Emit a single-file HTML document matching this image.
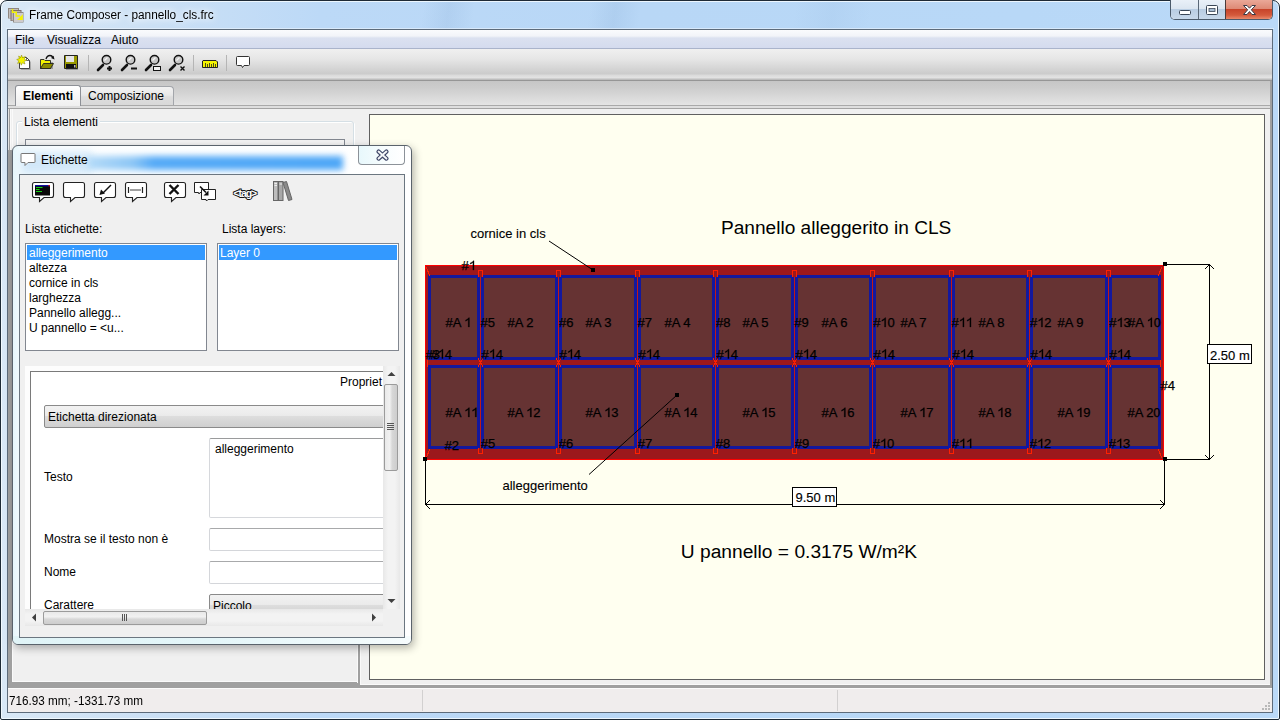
<!DOCTYPE html>
<html><head><meta charset="utf-8">
<style>
*{margin:0;padding:0;box-sizing:border-box}
html,body{width:1280px;height:720px;overflow:hidden;background:#fff;font-family:"Liberation Sans",sans-serif;font-size:12px;color:#000}
.a{position:absolute}
.t{position:absolute;white-space:nowrap;line-height:1}
</style></head><body>
<!-- window frame -->
<div class="a" style="left:0;top:0;width:1280px;height:720px;border:1px solid #1e2a36;border-radius:7px 7px 2px 2px;box-shadow:inset 0 0 0 1px rgba(245,252,255,.85);background:linear-gradient(90deg,#d9e8f6 0%,#cbe0f5 12%,#bcd9f7 25%,#b8d7f6 50%,#b8d8f7 80%,#bad9f8 100%)"></div>

<div class="a" style="left:1px;top:2px;width:1278px;height:27px;background:linear-gradient(97deg,rgba(255,255,255,0) 33%,rgba(90,130,180,.10) 35%,rgba(255,255,255,0) 37%,rgba(255,255,255,0) 46%,rgba(90,130,180,.10) 48%,rgba(255,255,255,0) 50%,rgba(255,255,255,0) 62%,rgba(90,130,180,.06) 65%,rgba(255,255,255,0) 68%)"></div>
<!-- caption buttons -->
<div class="a" style="left:1170px;top:0;width:103px;height:20px;border:1px solid #4b5a6b;border-top:none;border-radius:0 0 5px 5px;overflow:hidden;background:#fff">
  <div class="a" style="left:0;top:0;width:28px;height:19px;background:linear-gradient(#e9f0f8 0%,#dce6f1 45%,#b9cde3 50%,#c7d8ea 100%);border-right:1px solid #5a6878"></div>
  <div class="a" style="left:28px;top:0;width:27px;height:19px;background:linear-gradient(#e9f0f8 0%,#dce6f1 45%,#b9cde3 50%,#c7d8ea 100%);border-right:1px solid #4a3a3a"></div>
  <div class="a" style="left:55px;top:0;width:47px;height:19px;background:linear-gradient(#eaa898 0%,#de8a76 45%,#c7442a 50%,#d45a3c 80%,#e98a6c 100%)"></div>
</div>
<svg class="a" style="left:1170px;top:0" width="103" height="20" viewBox="1170 0 103 20">
  <rect x="1179.5" y="10.5" width="11" height="4" rx="1" fill="#fff" stroke="#3a4656" stroke-width="1"/>
  <rect x="1206.5" y="5.5" width="11" height="9" rx="1" fill="#fff" stroke="#3a4656" stroke-width="1"/>
  <rect x="1209" y="8.5" width="6" height="3" fill="#a8bdd4" stroke="#3a4656" stroke-width="0.8"/>
  <path d="M1243.5 5.5 H1247 L1249.5 8.2 L1252 5.5 H1255.5 L1251.3 9.8 L1255.5 14.5 H1252 L1249.5 11.6 L1247 14.5 H1243.5 L1247.7 9.8Z" fill="#fff" stroke="#3a3a46" stroke-width="1" stroke-linejoin="round"/>
</svg>

<!-- title -->
<div class="t" style="left:29px;top:9px;font-size:12px;color:#000;transform:scaleX(0.985);text-shadow:0 0 6px #fff,0 0 10px #fff;transform-origin:0 0">Frame Composer - pannello_cls.frc</div>

<div class="a" style="left:6px;top:28px;width:1268px;height:1px;background:rgba(240,248,255,.55)"></div>
<!-- client area -->
<div class="a" id="client" style="left:7px;top:29px;width:1266px;height:684px;border:1px solid #5d6b7a;background:#f0f0f0"></div>

<!-- menu bar -->
<div class="a" style="left:8px;top:30px;width:1264px;height:19px;background:linear-gradient(#fafbfd 0px,#f2f4f9 6px,#dbe1f0 8px,#d4dbee 18px);border-bottom:1px solid #aab4cb"></div>
<div class="t" style="left:15px;top:34px">File</div>
<div class="t" style="left:47px;top:34px">Visualizza</div>
<div class="t" style="left:111px;top:34px">Aiuto</div>

<!-- toolbar -->
<div class="a" style="left:8px;top:49px;width:1264px;height:31px;background:linear-gradient(#f0f0f0 0px,#e6e6e6 10px,#cbcbcb 25px,#dadada 26px,#e3e3e3 29px,#bdbdbd 30px)"></div>
<div class="a" style="left:8px;top:80px;width:1264px;height:1px;background:#969696"></div>

<!-- tab strip -->
<div class="a" style="left:8px;top:81px;width:1264px;height:24px;background:linear-gradient(#c6c6c6,#cdcdcd 30%,#e4e4e4)"></div>
<div class="a" style="left:8px;top:105px;width:1264px;height:1px;background:#a9a9a9"></div>
<div class="a" style="left:8px;top:106px;width:1264px;height:2px;background:#dedede"></div>
<div class="a" style="left:8px;top:108px;width:1264px;height:1px;background:#a3a3a3"></div>



<!-- title icon -->
<svg class="a" style="left:6px;top:6px" width="20" height="20" viewBox="6 6 20 20">
  <rect x="8" y="8" width="11" height="10.5" fill="#8f8780"/>
  <rect x="9" y="9" width="9" height="9" fill="#c4bfbd"/>
  <rect x="10.5" y="10" width="11" height="11" fill="#7e6f66"/>
  <rect x="11.5" y="11" width="9" height="9.5" fill="#bdb6b3"/>
  <rect x="13" y="12" width="10.5" height="10.5" fill="#8e8984"/>
  <rect x="14" y="13" width="9" height="9" fill="#cfcbcb"/>
  <path d="M12.5 9 V12.3 H16.2 V16 H20" fill="none" stroke="#f2f200" stroke-width="1.5"/>
  <path d="M22.8 14.2 V20 H17Z" fill="#f2f200"/>
</svg>
<!-- main toolbar icons -->
<svg class="a" style="left:0;top:49px" width="260" height="28" viewBox="0 49 260 28">
  <g>
    <!-- new -->
    <path d="M20 58 H27 L30 61 V69 H20Z" fill="#555" transform="translate(1,1)" opacity=".35"/>
    <path d="M19.5 57.5 H26.5 L29.5 60.5 V68.5 H19.5Z" fill="#fff" stroke="#444" stroke-width="1"/>
    <path d="M26.5 57.5 V60.5 H29.5" fill="none" stroke="#444" stroke-width="0.8"/>
    <path d="M21.5 55 L22.6 57.6 L25.3 56.5 L24.2 59.2 L26.6 60.3 L24.1 61.3 L25 64 L22.4 62.8 L21.3 65.2 L20.3 62.6 L17.6 63.4 L18.8 60.9 L16.7 59.5 L19.3 58.6 L18.6 56 L20.9 57.4Z" fill="#f3f300" stroke="#8a8a00" stroke-width="0.5"/>
    <!-- open -->
    <path d="M41 60 H45 L46 61 H52 V68 H41Z" fill="#333" transform="translate(1,1)" opacity=".35"/>
    <path d="M40.5 59.5 H44 L45 60.5 H50.5 V68.5 H40.5Z" fill="#f2f200" stroke="#222" stroke-width="0.9"/>
    <path d="M40.5 68.5 L43.5 63.5 H53.5 L50.5 68.5Z" fill="#8c8c00" stroke="#222" stroke-width="0.9"/>
    <path d="M46 59 Q47 55.5 50 55.5 Q52 55.5 53 57.5" fill="none" stroke="#111" stroke-width="1.3"/>
    <path d="M51 58 L54.5 59.5 L53.6 55.8Z" fill="#111"/>
    <!-- save -->
    <path d="M65 56 H77 V69 H65Z" fill="#333" transform="translate(1,1)" opacity=".35"/>
    <path d="M64.5 55.5 H77.5 V68.5 H64.5Z" fill="#999900" stroke="#222" stroke-width="1"/>
    <rect x="66" y="56" width="8" height="6" fill="#e6e6e6"/>
    <rect x="66" y="64" width="10" height="4" fill="#111"/>
    <rect x="74" y="65" width="1.5" height="2.5" fill="#bbb"/>
    <!-- sep -->
    <rect x="88" y="55" width="1" height="16" fill="#b5b5b5"/>
    <rect x="193" y="55" width="1" height="16" fill="#b5b5b5"/>
    <rect x="226" y="55" width="1" height="16" fill="#b5b5b5"/>
  </g>
  <g id="zooms">
    <g>
      <path d="M98 70 L103 65" stroke="#111" stroke-width="2.6" stroke-linecap="round"/>
      <circle cx="106.5" cy="59.8" r="4.3" fill="#c8c8c8" stroke="#111" stroke-width="1.4"/>
      <path d="M104.5 60.5 L107.5 57.5" stroke="#f5f5f5" stroke-width="1.2"/>
      <path d="M107 68.5 H112 M109.5 66 V71" stroke="#111" stroke-width="2"/>
    </g>
    <g>
      <path d="M122 70 L127 65" stroke="#111" stroke-width="2.6" stroke-linecap="round"/>
      <circle cx="130.5" cy="59.8" r="4.3" fill="#c8c8c8" stroke="#111" stroke-width="1.4"/>
      <path d="M128.5 60.5 L131.5 57.5" stroke="#f5f5f5" stroke-width="1.2"/>
      <path d="M131 68.5 H137" stroke="#111" stroke-width="2"/>
    </g>
    <g>
      <path d="M146 70 L151 65" stroke="#111" stroke-width="2.6" stroke-linecap="round"/>
      <circle cx="154.5" cy="59.8" r="4.3" fill="#c8c8c8" stroke="#111" stroke-width="1.4"/>
      <path d="M152.5 60.5 L155.5 57.5" stroke="#f5f5f5" stroke-width="1.2"/>
      <rect x="153.5" y="66.5" width="7" height="4" fill="#f4f4f4" stroke="#111" stroke-width="1"/>
    </g>
    <g>
      <path d="M170 70 L175 65" stroke="#111" stroke-width="2.6" stroke-linecap="round"/>
      <circle cx="178.5" cy="59.8" r="4.3" fill="#c8c8c8" stroke="#111" stroke-width="1.4"/>
      <path d="M176.5 60.5 L179.5 57.5" stroke="#f5f5f5" stroke-width="1.2"/>
      <path d="M180.5 66.5 L184.5 70.5 M184.5 66.5 L180.5 70.5" stroke="#111" stroke-width="1.4"/>
    </g>
  </g>
  <!-- ruler -->
  <rect x="203" y="61" width="15" height="7" rx="1" fill="#444" opacity=".3"/>
  <path d="M203 60.5 H216 L217.5 62 V67.5 H202.5 V61Z" fill="#f5f500" stroke="#222" stroke-width="1"/>
  <path d="M205.5 63 V67 M207.5 64 V67 M209.5 63 V67 M211.5 64 V67 M213.5 63 V67 M215.5 64 V67" stroke="#222" stroke-width="0.8"/>
  <!-- bubble -->
  <path d="M237.5 56.5 H248.5 Q249.5 56.5 249.5 57.5 V64.5 Q249.5 65.5 248.5 65.5 H244 L242.5 67.5 L241.5 65.5 H237.5 Q236.5 65.5 236.5 64.5 V57.5 Q236.5 56.5 237.5 56.5Z" fill="#fff" stroke="#333" stroke-width="1"/>
</svg>

<!-- tabs -->
<div class="a" style="left:15px;top:85px;width:66px;height:21px;border:1px solid #8d9096;border-bottom:none;border-radius:3px 3px 0 0;background:linear-gradient(#ffffff,#f7f7f7 50%,#efefef)"></div>
<div class="t" style="left:23px;top:90px;font-weight:bold;font-size:12px">Elementi</div>
<div class="a" style="left:81px;top:86px;width:93px;height:19px;border:1px solid #a3a6ab;border-left:none;border-bottom:none;border-radius:0 4px 0 0;background:linear-gradient(#f2f2f2,#e8e8e8 45%,#dddddd 55%,#d8d8d8)"></div>
<div class="t" style="left:88px;top:90px">Composizione</div>

<!-- left panel -->
<div class="a" style="left:8px;top:109px;width:352px;height:579px;background:#a0a0a0"></div>
<div class="a" style="left:12px;top:109px;width:346px;height:573px;background:#f0f0f0;border-left:1px solid #fafafa;border-bottom:1px solid #fafafa"></div>
<div class="a" style="left:357px;top:109px;width:1px;height:574px;background:#fafafa"></div>
<div class="a" style="left:8px;top:109px;width:4px;height:41px;background:linear-gradient(90deg,#e3e3e3 25%,#a0a0a0 25%,#a0a0a0 50%,#fafafa 50%,#fafafa 75%,#f0f0f0 75%)"></div>
<div class="a" style="left:356px;top:109px;width:4px;height:41px;background:#f0f0f0"></div>
<!-- group box Lista elementi -->
<div class="a" style="left:16px;top:121px;width:338px;height:480px;border:1px solid #d5dfe5;border-radius:3px;box-shadow:inset 1px 1px 0 #fff,1px 1px 0 #fff"></div>
<div class="a" style="left:22px;top:114px;width:78px;height:14px;background:#f0f0f0"></div>
<div class="t" style="left:24px;top:116px">Lista elementi</div>
<div class="a" style="left:25px;top:139px;width:320px;height:60px;border:1px solid #828790;background:#f3f3f3"></div>

<!-- right panel -->
<div class="a" style="left:360px;top:109px;width:912px;height:576px;background:#f0f0f0"></div>
<div class="a" style="left:360px;top:645px;width:1px;height:40px;background:#fafafa"></div>
<div class="a" style="left:1270px;top:81px;width:2px;height:604px;background:#a0a0a0"></div>
<div class="a" style="left:360px;top:684px;width:910px;height:1px;background:#fafafa"></div>
<!-- canvas -->
<div class="a" style="left:369px;top:114px;width:896px;height:566px;border:1px solid #606060;background:#fffff0;overflow:hidden">
<svg width="896" height="566" style="position:absolute;left:-1px;top:-1px" viewBox="369 114 896 566" id="draw"><g shape-rendering="crispEdges"><rect x="425" y="265" width="739" height="195" fill="#9c181c"/><rect x="425.5" y="265.5" width="738" height="194" fill="none" stroke="#ff0000" stroke-width="1"/><rect x="428" y="275" width="52" height="85" fill="#13189e"/><rect x="431" y="278" width="46" height="79" fill="#663333"/><rect x="481" y="275" width="77" height="85" fill="#13189e"/><rect x="484" y="278" width="71" height="79" fill="#663333"/><rect x="559" y="275" width="78" height="85" fill="#13189e"/><rect x="562" y="278" width="72" height="79" fill="#663333"/><rect x="638" y="275" width="77" height="85" fill="#13189e"/><rect x="641" y="278" width="71" height="79" fill="#663333"/><rect x="716" y="275" width="78" height="85" fill="#13189e"/><rect x="719" y="278" width="72" height="79" fill="#663333"/><rect x="795" y="275" width="77" height="85" fill="#13189e"/><rect x="798" y="278" width="71" height="79" fill="#663333"/><rect x="873" y="275" width="78" height="85" fill="#13189e"/><rect x="876" y="278" width="72" height="79" fill="#663333"/><rect x="952" y="275" width="77" height="85" fill="#13189e"/><rect x="955" y="278" width="71" height="79" fill="#663333"/><rect x="1030" y="275" width="78" height="85" fill="#13189e"/><rect x="1033" y="278" width="72" height="79" fill="#663333"/><rect x="1109" y="275" width="52" height="85" fill="#13189e"/><rect x="1112" y="278" width="46" height="79" fill="#663333"/><rect x="428" y="365" width="52" height="84" fill="#13189e"/><rect x="431" y="368" width="46" height="78" fill="#663333"/><rect x="481" y="365" width="77" height="84" fill="#13189e"/><rect x="484" y="368" width="71" height="78" fill="#663333"/><rect x="559" y="365" width="78" height="84" fill="#13189e"/><rect x="562" y="368" width="72" height="78" fill="#663333"/><rect x="638" y="365" width="77" height="84" fill="#13189e"/><rect x="641" y="368" width="71" height="78" fill="#663333"/><rect x="716" y="365" width="78" height="84" fill="#13189e"/><rect x="719" y="368" width="72" height="78" fill="#663333"/><rect x="795" y="365" width="77" height="84" fill="#13189e"/><rect x="798" y="368" width="71" height="78" fill="#663333"/><rect x="873" y="365" width="78" height="84" fill="#13189e"/><rect x="876" y="368" width="72" height="78" fill="#663333"/><rect x="952" y="365" width="77" height="84" fill="#13189e"/><rect x="955" y="368" width="71" height="78" fill="#663333"/><rect x="1030" y="365" width="78" height="84" fill="#13189e"/><rect x="1033" y="368" width="72" height="78" fill="#663333"/><rect x="1109" y="365" width="52" height="84" fill="#13189e"/><rect x="1112" y="368" width="46" height="78" fill="#663333"/><rect x="480" y="275" width="1" height="174" fill="#c01c14"/><rect x="558" y="275" width="1" height="174" fill="#c01c14"/><rect x="637" y="275" width="1" height="174" fill="#c01c14"/><rect x="715" y="275" width="1" height="174" fill="#c01c14"/><rect x="794" y="275" width="1" height="174" fill="#c01c14"/><rect x="872" y="275" width="1" height="174" fill="#c01c14"/><rect x="951" y="275" width="1" height="174" fill="#c01c14"/><rect x="1029" y="275" width="1" height="174" fill="#c01c14"/><rect x="1108" y="275" width="1" height="174" fill="#c01c14"/><rect x="479" y="271" width="3" height="6" fill="#9c181c"/><path d="M478.5 277 V270.5 H482.5 V277" fill="none" stroke="#ff2000" stroke-width="1"/><rect x="479" y="448" width="3" height="5" fill="#9c181c"/><path d="M478.5 448 V453.5 H482.5 V448" fill="none" stroke="#ff2000" stroke-width="1"/><path d="M478 358 L483 367 M483 358 L478 367" stroke="#ff2000" stroke-width="1" fill="none"/><rect x="557" y="271" width="3" height="6" fill="#9c181c"/><path d="M556.5 277 V270.5 H560.5 V277" fill="none" stroke="#ff2000" stroke-width="1"/><rect x="557" y="448" width="3" height="5" fill="#9c181c"/><path d="M556.5 448 V453.5 H560.5 V448" fill="none" stroke="#ff2000" stroke-width="1"/><path d="M556 358 L561 367 M561 358 L556 367" stroke="#ff2000" stroke-width="1" fill="none"/><rect x="636" y="271" width="3" height="6" fill="#9c181c"/><path d="M635.5 277 V270.5 H639.5 V277" fill="none" stroke="#ff2000" stroke-width="1"/><rect x="636" y="448" width="3" height="5" fill="#9c181c"/><path d="M635.5 448 V453.5 H639.5 V448" fill="none" stroke="#ff2000" stroke-width="1"/><path d="M635 358 L640 367 M640 358 L635 367" stroke="#ff2000" stroke-width="1" fill="none"/><rect x="714" y="271" width="3" height="6" fill="#9c181c"/><path d="M713.5 277 V270.5 H717.5 V277" fill="none" stroke="#ff2000" stroke-width="1"/><rect x="714" y="448" width="3" height="5" fill="#9c181c"/><path d="M713.5 448 V453.5 H717.5 V448" fill="none" stroke="#ff2000" stroke-width="1"/><path d="M713 358 L718 367 M718 358 L713 367" stroke="#ff2000" stroke-width="1" fill="none"/><rect x="793" y="271" width="3" height="6" fill="#9c181c"/><path d="M792.5 277 V270.5 H796.5 V277" fill="none" stroke="#ff2000" stroke-width="1"/><rect x="793" y="448" width="3" height="5" fill="#9c181c"/><path d="M792.5 448 V453.5 H796.5 V448" fill="none" stroke="#ff2000" stroke-width="1"/><path d="M792 358 L797 367 M797 358 L792 367" stroke="#ff2000" stroke-width="1" fill="none"/><rect x="871" y="271" width="3" height="6" fill="#9c181c"/><path d="M870.5 277 V270.5 H874.5 V277" fill="none" stroke="#ff2000" stroke-width="1"/><rect x="871" y="448" width="3" height="5" fill="#9c181c"/><path d="M870.5 448 V453.5 H874.5 V448" fill="none" stroke="#ff2000" stroke-width="1"/><path d="M870 358 L875 367 M875 358 L870 367" stroke="#ff2000" stroke-width="1" fill="none"/><rect x="950" y="271" width="3" height="6" fill="#9c181c"/><path d="M949.5 277 V270.5 H953.5 V277" fill="none" stroke="#ff2000" stroke-width="1"/><rect x="950" y="448" width="3" height="5" fill="#9c181c"/><path d="M949.5 448 V453.5 H953.5 V448" fill="none" stroke="#ff2000" stroke-width="1"/><path d="M949 358 L954 367 M954 358 L949 367" stroke="#ff2000" stroke-width="1" fill="none"/><rect x="1028" y="271" width="3" height="6" fill="#9c181c"/><path d="M1027.5 277 V270.5 H1031.5 V277" fill="none" stroke="#ff2000" stroke-width="1"/><rect x="1028" y="448" width="3" height="5" fill="#9c181c"/><path d="M1027.5 448 V453.5 H1031.5 V448" fill="none" stroke="#ff2000" stroke-width="1"/><path d="M1027 358 L1032 367 M1032 358 L1027 367" stroke="#ff2000" stroke-width="1" fill="none"/><rect x="1107" y="271" width="3" height="6" fill="#9c181c"/><path d="M1106.5 277 V270.5 H1110.5 V277" fill="none" stroke="#ff2000" stroke-width="1"/><rect x="1107" y="448" width="3" height="5" fill="#9c181c"/><path d="M1106.5 448 V453.5 H1110.5 V448" fill="none" stroke="#ff2000" stroke-width="1"/><path d="M1106 358 L1111 367 M1111 358 L1106 367" stroke="#ff2000" stroke-width="1" fill="none"/><path d="M426 267 L430 276 M1162 267 L1158 276 M426 458 L430 449 M1162 458 L1158 449" stroke="#ff2000" stroke-width="1" fill="none"/><path d="M427.5 360 L427.5 367 M1160.5 360 L1160.5 367" stroke="#ff2000" stroke-width="1" fill="none"/></g><path d="M549 241 L593 270" stroke="#000" stroke-width="1" fill="none"/><rect x="591" y="268" width="4" height="4" fill="#000"/><path d="M589 474.5 L677 395" stroke="#000" stroke-width="1" fill="none"/><rect x="675" y="393" width="4" height="4" fill="#000"/><path d="M425.5 459 V505 M1164.5 459 V505 M425 504.5 H1165 M430 500 L425.5 504.5 L430 509 M1160 500 L1164.5 504.5 L1160 509" stroke="#000" stroke-width="1" fill="none"/><rect x="423" y="457" width="4" height="4" fill="#000"/><rect x="1163" y="262" width="4" height="4" fill="#000"/><rect x="1163" y="457" width="4" height="4" fill="#000"/><path d="M1164 264.5 H1210 M1164 459.5 H1210 M1209.5 264 V460 M1205 269 L1209.5 264.5 L1214 269 M1205 455 L1209.5 459.5 L1214 455" stroke="#000" stroke-width="1" fill="none"/><rect x="792.5" y="487.5" width="44" height="19" fill="#fff" stroke="#000" stroke-width="1"/><rect x="1207.5" y="344.5" width="44" height="19" fill="#fff" stroke="#000" stroke-width="1"/><g font-family="Liberation Sans" fill="#000" stroke="#000" stroke-width="0.25"><text x="445.50" y="327" font-size="13">#</text><text x="452.80" y="327" font-size="13">A</text><path d="M0.312 0 H0.402 V-0.716 H0.343 Q0.30 -0.63 0.105 -0.53 V-0.448 Q0.24 -0.50 0.312 -0.575 Z" stroke-width="0.02" transform="translate(464.20,327) scale(13)"/><text x="480.50" y="327" font-size="13">#</text><text x="487.80" y="327" font-size="13">5</text><text x="507.50" y="327" font-size="13">#</text><text x="514.80" y="327" font-size="13">A</text><text x="526.20" y="327" font-size="13">2</text><text x="559.00" y="327" font-size="13">#</text><text x="566.30" y="327" font-size="13">6</text><text x="585.50" y="327" font-size="13">#</text><text x="592.80" y="327" font-size="13">A</text><text x="604.20" y="327" font-size="13">3</text><text x="637.50" y="327" font-size="13">#</text><text x="644.80" y="327" font-size="13">7</text><text x="664.50" y="327" font-size="13">#</text><text x="671.80" y="327" font-size="13">A</text><text x="683.20" y="327" font-size="13">4</text><text x="716.00" y="327" font-size="13">#</text><text x="723.30" y="327" font-size="13">8</text><text x="742.50" y="327" font-size="13">#</text><text x="749.80" y="327" font-size="13">A</text><text x="761.20" y="327" font-size="13">5</text><text x="794.20" y="327" font-size="13">#</text><text x="801.50" y="327" font-size="13">9</text><text x="821.50" y="327" font-size="13">#</text><text x="828.80" y="327" font-size="13">A</text><text x="840.20" y="327" font-size="13">6</text><text x="873.20" y="327" font-size="13">#</text><path d="M0.312 0 H0.402 V-0.716 H0.343 Q0.30 -0.63 0.105 -0.53 V-0.448 Q0.24 -0.50 0.312 -0.575 Z" stroke-width="0.02" transform="translate(880.50,327) scale(13)"/><text x="887.50" y="327" font-size="13">0</text><text x="900.50" y="327" font-size="13">#</text><text x="907.80" y="327" font-size="13">A</text><text x="919.20" y="327" font-size="13">7</text><text x="951.50" y="327" font-size="13">#</text><path d="M0.312 0 H0.402 V-0.716 H0.343 Q0.30 -0.63 0.105 -0.53 V-0.448 Q0.24 -0.50 0.312 -0.575 Z" stroke-width="0.02" transform="translate(958.80,327) scale(13)"/><path d="M0.312 0 H0.402 V-0.716 H0.343 Q0.30 -0.63 0.105 -0.53 V-0.448 Q0.24 -0.50 0.312 -0.575 Z" stroke-width="0.02" transform="translate(965.80,327) scale(13)"/><text x="978.50" y="327" font-size="13">#</text><text x="985.80" y="327" font-size="13">A</text><text x="997.20" y="327" font-size="13">8</text><text x="1030.00" y="327" font-size="13">#</text><path d="M0.312 0 H0.402 V-0.716 H0.343 Q0.30 -0.63 0.105 -0.53 V-0.448 Q0.24 -0.50 0.312 -0.575 Z" stroke-width="0.02" transform="translate(1037.30,327) scale(13)"/><text x="1044.30" y="327" font-size="13">2</text><text x="1057.50" y="327" font-size="13">#</text><text x="1064.80" y="327" font-size="13">A</text><text x="1076.20" y="327" font-size="13">9</text><text x="1109.20" y="327" font-size="13">#</text><path d="M0.312 0 H0.402 V-0.716 H0.343 Q0.30 -0.63 0.105 -0.53 V-0.448 Q0.24 -0.50 0.312 -0.575 Z" stroke-width="0.02" transform="translate(1116.50,327) scale(13)"/><text x="1123.50" y="327" font-size="13">3</text><text x="1128.00" y="327" font-size="13">#</text><text x="1135.30" y="327" font-size="13">A</text><path d="M0.312 0 H0.402 V-0.716 H0.343 Q0.30 -0.63 0.105 -0.53 V-0.448 Q0.24 -0.50 0.312 -0.575 Z" stroke-width="0.02" transform="translate(1146.70,327) scale(13)"/><text x="1153.70" y="327" font-size="13">0</text><text x="425.50" y="358.5" font-size="13">#</text><text x="432.80" y="358.5" font-size="13">3</text><text x="430.50" y="358.5" font-size="13">#</text><path d="M0.312 0 H0.402 V-0.716 H0.343 Q0.30 -0.63 0.105 -0.53 V-0.448 Q0.24 -0.50 0.312 -0.575 Z" stroke-width="0.02" transform="translate(437.80,358.5) scale(13)"/><text x="444.80" y="358.5" font-size="13">4</text><text x="481.50" y="358.5" font-size="13">#</text><path d="M0.312 0 H0.402 V-0.716 H0.343 Q0.30 -0.63 0.105 -0.53 V-0.448 Q0.24 -0.50 0.312 -0.575 Z" stroke-width="0.02" transform="translate(488.80,358.5) scale(13)"/><text x="495.80" y="358.5" font-size="13">4</text><text x="559.50" y="358.5" font-size="13">#</text><path d="M0.312 0 H0.402 V-0.716 H0.343 Q0.30 -0.63 0.105 -0.53 V-0.448 Q0.24 -0.50 0.312 -0.575 Z" stroke-width="0.02" transform="translate(566.80,358.5) scale(13)"/><text x="573.80" y="358.5" font-size="13">4</text><text x="638.50" y="358.5" font-size="13">#</text><path d="M0.312 0 H0.402 V-0.716 H0.343 Q0.30 -0.63 0.105 -0.53 V-0.448 Q0.24 -0.50 0.312 -0.575 Z" stroke-width="0.02" transform="translate(645.80,358.5) scale(13)"/><text x="652.80" y="358.5" font-size="13">4</text><text x="716.50" y="358.5" font-size="13">#</text><path d="M0.312 0 H0.402 V-0.716 H0.343 Q0.30 -0.63 0.105 -0.53 V-0.448 Q0.24 -0.50 0.312 -0.575 Z" stroke-width="0.02" transform="translate(723.80,358.5) scale(13)"/><text x="730.80" y="358.5" font-size="13">4</text><text x="795.50" y="358.5" font-size="13">#</text><path d="M0.312 0 H0.402 V-0.716 H0.343 Q0.30 -0.63 0.105 -0.53 V-0.448 Q0.24 -0.50 0.312 -0.575 Z" stroke-width="0.02" transform="translate(802.80,358.5) scale(13)"/><text x="809.80" y="358.5" font-size="13">4</text><text x="873.50" y="358.5" font-size="13">#</text><path d="M0.312 0 H0.402 V-0.716 H0.343 Q0.30 -0.63 0.105 -0.53 V-0.448 Q0.24 -0.50 0.312 -0.575 Z" stroke-width="0.02" transform="translate(880.80,358.5) scale(13)"/><text x="887.80" y="358.5" font-size="13">4</text><text x="952.50" y="358.5" font-size="13">#</text><path d="M0.312 0 H0.402 V-0.716 H0.343 Q0.30 -0.63 0.105 -0.53 V-0.448 Q0.24 -0.50 0.312 -0.575 Z" stroke-width="0.02" transform="translate(959.80,358.5) scale(13)"/><text x="966.80" y="358.5" font-size="13">4</text><text x="1030.50" y="358.5" font-size="13">#</text><path d="M0.312 0 H0.402 V-0.716 H0.343 Q0.30 -0.63 0.105 -0.53 V-0.448 Q0.24 -0.50 0.312 -0.575 Z" stroke-width="0.02" transform="translate(1037.80,358.5) scale(13)"/><text x="1044.80" y="358.5" font-size="13">4</text><text x="1109.50" y="358.5" font-size="13">#</text><path d="M0.312 0 H0.402 V-0.716 H0.343 Q0.30 -0.63 0.105 -0.53 V-0.448 Q0.24 -0.50 0.312 -0.575 Z" stroke-width="0.02" transform="translate(1116.80,358.5) scale(13)"/><text x="1123.80" y="358.5" font-size="13">4</text><text x="445.50" y="417" font-size="13">#</text><text x="452.80" y="417" font-size="13">A</text><path d="M0.312 0 H0.402 V-0.716 H0.343 Q0.30 -0.63 0.105 -0.53 V-0.448 Q0.24 -0.50 0.312 -0.575 Z" stroke-width="0.02" transform="translate(464.20,417) scale(13)"/><path d="M0.312 0 H0.402 V-0.716 H0.343 Q0.30 -0.63 0.105 -0.53 V-0.448 Q0.24 -0.50 0.312 -0.575 Z" stroke-width="0.02" transform="translate(471.20,417) scale(13)"/><text x="507.50" y="417" font-size="13">#</text><text x="514.80" y="417" font-size="13">A</text><path d="M0.312 0 H0.402 V-0.716 H0.343 Q0.30 -0.63 0.105 -0.53 V-0.448 Q0.24 -0.50 0.312 -0.575 Z" stroke-width="0.02" transform="translate(526.20,417) scale(13)"/><text x="533.20" y="417" font-size="13">2</text><text x="585.50" y="417" font-size="13">#</text><text x="592.80" y="417" font-size="13">A</text><path d="M0.312 0 H0.402 V-0.716 H0.343 Q0.30 -0.63 0.105 -0.53 V-0.448 Q0.24 -0.50 0.312 -0.575 Z" stroke-width="0.02" transform="translate(604.20,417) scale(13)"/><text x="611.20" y="417" font-size="13">3</text><text x="664.50" y="417" font-size="13">#</text><text x="671.80" y="417" font-size="13">A</text><path d="M0.312 0 H0.402 V-0.716 H0.343 Q0.30 -0.63 0.105 -0.53 V-0.448 Q0.24 -0.50 0.312 -0.575 Z" stroke-width="0.02" transform="translate(683.20,417) scale(13)"/><text x="690.20" y="417" font-size="13">4</text><text x="742.50" y="417" font-size="13">#</text><text x="749.80" y="417" font-size="13">A</text><path d="M0.312 0 H0.402 V-0.716 H0.343 Q0.30 -0.63 0.105 -0.53 V-0.448 Q0.24 -0.50 0.312 -0.575 Z" stroke-width="0.02" transform="translate(761.20,417) scale(13)"/><text x="768.20" y="417" font-size="13">5</text><text x="821.50" y="417" font-size="13">#</text><text x="828.80" y="417" font-size="13">A</text><path d="M0.312 0 H0.402 V-0.716 H0.343 Q0.30 -0.63 0.105 -0.53 V-0.448 Q0.24 -0.50 0.312 -0.575 Z" stroke-width="0.02" transform="translate(840.20,417) scale(13)"/><text x="847.20" y="417" font-size="13">6</text><text x="900.50" y="417" font-size="13">#</text><text x="907.80" y="417" font-size="13">A</text><path d="M0.312 0 H0.402 V-0.716 H0.343 Q0.30 -0.63 0.105 -0.53 V-0.448 Q0.24 -0.50 0.312 -0.575 Z" stroke-width="0.02" transform="translate(919.20,417) scale(13)"/><text x="926.20" y="417" font-size="13">7</text><text x="978.50" y="417" font-size="13">#</text><text x="985.80" y="417" font-size="13">A</text><path d="M0.312 0 H0.402 V-0.716 H0.343 Q0.30 -0.63 0.105 -0.53 V-0.448 Q0.24 -0.50 0.312 -0.575 Z" stroke-width="0.02" transform="translate(997.20,417) scale(13)"/><text x="1004.20" y="417" font-size="13">8</text><text x="1057.50" y="417" font-size="13">#</text><text x="1064.80" y="417" font-size="13">A</text><path d="M0.312 0 H0.402 V-0.716 H0.343 Q0.30 -0.63 0.105 -0.53 V-0.448 Q0.24 -0.50 0.312 -0.575 Z" stroke-width="0.02" transform="translate(1076.20,417) scale(13)"/><text x="1083.20" y="417" font-size="13">9</text><text x="1127.50" y="417" font-size="13">#</text><text x="1134.80" y="417" font-size="13">A</text><text x="1146.20" y="417" font-size="13">2</text><text x="1153.20" y="417" font-size="13">0</text><text x="444.50" y="449.5" font-size="13">#</text><text x="451.80" y="449.5" font-size="13">2</text><text x="480.70" y="448" font-size="13">#</text><text x="488.00" y="448" font-size="13">5</text><text x="558.70" y="448" font-size="13">#</text><text x="566.00" y="448" font-size="13">6</text><text x="637.70" y="448" font-size="13">#</text><text x="645.00" y="448" font-size="13">7</text><text x="715.70" y="448" font-size="13">#</text><text x="723.00" y="448" font-size="13">8</text><text x="794.70" y="448" font-size="13">#</text><text x="802.00" y="448" font-size="13">9</text><text x="872.70" y="448" font-size="13">#</text><path d="M0.312 0 H0.402 V-0.716 H0.343 Q0.30 -0.63 0.105 -0.53 V-0.448 Q0.24 -0.50 0.312 -0.575 Z" stroke-width="0.02" transform="translate(880.00,448) scale(13)"/><text x="887.00" y="448" font-size="13">0</text><text x="951.70" y="448" font-size="13">#</text><path d="M0.312 0 H0.402 V-0.716 H0.343 Q0.30 -0.63 0.105 -0.53 V-0.448 Q0.24 -0.50 0.312 -0.575 Z" stroke-width="0.02" transform="translate(959.00,448) scale(13)"/><path d="M0.312 0 H0.402 V-0.716 H0.343 Q0.30 -0.63 0.105 -0.53 V-0.448 Q0.24 -0.50 0.312 -0.575 Z" stroke-width="0.02" transform="translate(966.00,448) scale(13)"/><text x="1029.70" y="448" font-size="13">#</text><path d="M0.312 0 H0.402 V-0.716 H0.343 Q0.30 -0.63 0.105 -0.53 V-0.448 Q0.24 -0.50 0.312 -0.575 Z" stroke-width="0.02" transform="translate(1037.00,448) scale(13)"/><text x="1044.00" y="448" font-size="13">2</text><text x="1108.70" y="448" font-size="13">#</text><path d="M0.312 0 H0.402 V-0.716 H0.343 Q0.30 -0.63 0.105 -0.53 V-0.448 Q0.24 -0.50 0.312 -0.575 Z" stroke-width="0.02" transform="translate(1116.00,448) scale(13)"/><text x="1123.00" y="448" font-size="13">3</text><text x="461.50" y="270" font-size="13">#</text><path d="M0.312 0 H0.402 V-0.716 H0.343 Q0.30 -0.63 0.105 -0.53 V-0.448 Q0.24 -0.50 0.312 -0.575 Z" stroke-width="0.02" transform="translate(468.80,270) scale(13)"/><text x="1160.50" y="390" font-size="13">#</text><text x="1167.80" y="390" font-size="13">4</text><text x="470.5" y="237.5" font-size="13" stroke-width="0.1">cornice in cls</text><text x="502.5" y="490" font-size="13" stroke-width="0.1">alleggerimento</text><text x="721" y="234" font-size="19.1" stroke-width="0">Pannello alleggerito in CLS</text><text x="680.8" y="558" font-size="19.2" stroke-width="0">U pannello = 0.3175 W/m²K</text><text x="795.5" y="502" font-size="13" stroke-width="0.15">9.50 m</text><text x="1210" y="360" font-size="13" stroke-width="0.15">2.50 m</text></g></svg>
</div>


<!-- ===== DIALOG ===== -->
<div class="a" style="left:12px;top:145px;width:400px;height:500px;border:1px solid #5a636c;border-radius:6px;box-shadow:2px 3px 9px rgba(0,0,0,0.3);background:linear-gradient(90deg,#e6f6fb 0px,#f4fbfd 8px,#fcfeff 40px,#ffffff 100%);overflow:hidden">
  <div class="a" style="left:0;top:490px;width:400px;height:10px;background:linear-gradient(90deg,#e0f4f7,#e4f6f9 50%,#f6fcfd)"></div>
  <!-- blurred listbox behind glass -->
  <div class="a" style="left:8px;top:6px;width:70px;height:22px;background:#d2e8f9;filter:blur(4px)"></div>
  <div class="a" style="left:74px;top:10px;width:256px;height:14px;background:linear-gradient(90deg,#b5dbf8 0%,#8cc6f6 18%,#55aaf7 26%,#4ea7f7 100%);filter:blur(3px)"></div>
  
</div>
<!-- dialog icon -->
<svg class="a" style="left:20px;top:152px" width="16" height="16" viewBox="0 0 16 16">
  <path d="M1.5 1.5 H14.5 Q15 1.5 15 2 V10 Q15 10.5 14.5 10.5 H8 L5 13.5 V10.5 H1.5 Q1 10.5 1 10 V2 Q1 1.5 1.5 1.5Z" fill="#fff" stroke="#777" stroke-width="1"/>
</svg>
<div class="t" style="left:41px;top:154px;font-size:12px">Etichette</div>
<!-- close button -->
<div class="a" style="left:358px;top:146px;width:47px;height:19px;border:1px solid #8c9299;border-top:none;border-radius:0 0 4px 4px;background:linear-gradient(90deg,#e8f8fc,#f8fdfe 60%,#ffffff)"></div>
<svg class="a" style="left:375px;top:149px" width="15" height="13" viewBox="0 0 15 13">
  <path d="M3.6 2.6 L11.4 9.6 M11.4 2.6 L3.6 9.6" stroke="#3c4466" stroke-width="4.2" stroke-linecap="round"/><path d="M3.6 2.6 L11.4 9.6 M11.4 2.6 L3.6 9.6" stroke="#f4f6f8" stroke-width="2" stroke-linecap="round"/>
</svg>

<!-- client -->
<div class="a" style="left:19px;top:174px;width:386px;height:464px;border:1px solid #6b7680;background:#f0f0f0"></div>


<!-- dialog toolbar icons -->
<svg class="a" style="left:20px;top:176px" width="290" height="30" viewBox="20 176 290 30">
  <g fill="#fff" stroke="#222" stroke-width="1.1">
    <path transform="translate(32,182)" d="M2.5 0.5 H19.5 Q21.5 0.5 21.5 2.5 V13.5 Q21.5 15.5 19.5 15.5 H12 L7.5 19.5 V15.5 H2.5 Q0.5 15.5 0.5 13.5 V2.5 Q0.5 0.5 2.5 0.5Z"/>
    <path transform="translate(63,182)" d="M2.5 0.5 H19.5 Q21.5 0.5 21.5 2.5 V13.5 Q21.5 15.5 19.5 15.5 H12 L7.5 19.5 V15.5 H2.5 Q0.5 15.5 0.5 13.5 V2.5 Q0.5 0.5 2.5 0.5Z"/>
    <path transform="translate(94,182)" d="M2.5 0.5 H19.5 Q21.5 0.5 21.5 2.5 V13.5 Q21.5 15.5 19.5 15.5 H12 L7.5 19.5 V15.5 H2.5 Q0.5 15.5 0.5 13.5 V2.5 Q0.5 0.5 2.5 0.5Z"/>
    <path transform="translate(125,182)" d="M2.5 0.5 H19.5 Q21.5 0.5 21.5 2.5 V13.5 Q21.5 15.5 19.5 15.5 H12 L7.5 19.5 V15.5 H2.5 Q0.5 15.5 0.5 13.5 V2.5 Q0.5 0.5 2.5 0.5Z"/>
    <path transform="translate(164,182)" d="M2.5 0.5 H19.5 Q21.5 0.5 21.5 2.5 V13.5 Q21.5 15.5 19.5 15.5 H12 L7.5 19.5 V15.5 H2.5 Q0.5 15.5 0.5 13.5 V2.5 Q0.5 0.5 2.5 0.5Z"/>
  </g>
  <!-- terminal -->
  <rect x="35" y="185" width="15" height="10.5" fill="#0a0a0a"/>
  <rect x="35" y="185" width="15" height="1.3" fill="#1010a0"/>
  <rect x="48.5" y="185" width="1.5" height="1.3" fill="#e01010"/>
  <path d="M36 187.5 H42.5 M36 189.5 H39.5 M36 191.5 H42" stroke="#14d014" stroke-width="1"/>
  <!-- arrow -->
  <path d="M111 185 L103 193" stroke="#111" stroke-width="1.4"/>
  <path d="M99.5 195 L101 189.5 L105 193.5Z" fill="#111"/>
  <!-- dimension -->
  <path d="M128.5 187 V193 M142.5 187 V193" stroke="#222" stroke-width="1.2"/>
  <path d="M130 190 H141" stroke="#777" stroke-width="1.4"/>
  <!-- X -->
  <path d="M169.5 185 L178.5 194 M178.5 185 L169.5 194" stroke="#111" stroke-width="2.4"/>
  <!-- copy bubbles -->
  <path d="M194.5 182.5 H208.5 V192.5 H200 L199 194 L198.5 192.5 H194.5Z" fill="#fff" stroke="#222" stroke-width="1"/>
  <path d="M201.5 189.5 H215.5 V199.5 H208 L206.5 201 L206 199.5 H201.5Z" fill="#fff" stroke="#222" stroke-width="1"/>
  <path d="M200 186.5 L206 192.5" stroke="#111" stroke-width="1.6"/>
  <path d="M203.5 195.5 H208.5 V190.5Z" fill="#111"/>
  <!-- tag -->
  <text x="233.5" y="197" font-family="Liberation Sans" font-size="10.5" font-weight="bold" fill="#fff" stroke="#111" stroke-width="2" paint-order="stroke" letter-spacing="-1.1">&lt;tag&gt;</text>
  <!-- books -->
  <rect x="273.5" y="181.5" width="4.5" height="19" fill="#bdbdbd" stroke="#666" stroke-width="1"/>
  <rect x="278.5" y="181.5" width="4.5" height="19" fill="#a8a8a8" stroke="#666" stroke-width="1"/>
  <path d="M283 182.5 L286.5 181.5 L292 199.5 L288.5 200.5Z" fill="#8a8a8a" stroke="#666" stroke-width="1"/>
  <path d="M274.5 183.5 H277 M274.5 185.5 H277 M279.5 184 H282" stroke="#eee" stroke-width="1"/>
</svg>

<!-- labels -->
<div class="t" style="left:25px;top:223px">Lista etichette:</div>
<div class="t" style="left:222px;top:223px">Lista layers:</div>
<!-- listbox 1 -->
<div class="a" style="left:25px;top:243px;width:182px;height:108px;border:1px solid #828790;background:#fff"></div>
<div class="a" style="left:27px;top:245px;width:178px;height:15px;background:#3399ff"></div>
<div class="t" style="left:29px;top:247px;color:#fff">alleggerimento</div>
<div class="t" style="left:29px;top:262px">altezza</div>
<div class="t" style="left:29px;top:277px">cornice in cls</div>
<div class="t" style="left:29px;top:292px">larghezza</div>
<div class="t" style="left:29px;top:307px">Pannello allegg...</div>
<div class="t" style="left:29px;top:322px">U pannello = &lt;u...</div>
<!-- listbox 2 -->
<div class="a" style="left:217px;top:243px;width:182px;height:108px;border:1px solid #828790;background:#fff"></div>
<div class="a" style="left:219px;top:245px;width:178px;height:15px;background:#3399ff"></div>
<div class="t" style="left:220px;top:247px;color:#fff">Layer 0</div>

<!-- property panel -->
<div class="a" style="left:25px;top:366px;width:358px;height:244px;background:#fdfdfd;overflow:hidden">
  <div class="a" style="left:5px;top:5px;width:400px;height:400px;border:1px solid #7a7a7a;background:#fff"></div>
  <div class="t" style="left:315px;top:10px">Propriet</div>
  <div class="a" style="left:19px;top:39px;width:360px;height:23px;border:1px solid #8a8a8a;border-radius:2px;background:linear-gradient(#f2f2f2 0%,#ebebeb 45%,#dddddd 50%,#cfcfcf 100%)"></div>
  <div class="t" style="left:23px;top:45px">Etichetta direzionata</div>
  <div class="t" style="left:19px;top:105px">Testo</div>
  <div class="a" style="left:184px;top:72px;width:200px;height:80px;border:1px solid #d6d8dc;border-top-color:#9a9b9c;border-radius:2px;background:#fff"></div>
  <div class="t" style="left:190px;top:77px">alleggerimento</div>
  <div class="t" style="left:19px;top:167px">Mostra se il testo non è</div>
  <div class="a" style="left:184px;top:162px;width:200px;height:23px;border:1px solid #d4d6da;border-top-color:#a8a9ab;border-radius:2px;background:#fff"></div>
  <div class="t" style="left:19px;top:200px">Nome</div>
  <div class="a" style="left:184px;top:195px;width:200px;height:23px;border:1px solid #d4d6da;border-top-color:#a8a9ab;border-radius:2px;background:#fff"></div>
  <div class="t" style="left:19px;top:233px">Carattere</div>
  <div class="a" style="left:184px;top:228px;width:200px;height:23px;border:1px solid #8a8a8a;border-radius:2px;background:linear-gradient(#f2f2f2 0%,#ebebeb 45%,#dddddd 50%,#cfcfcf 100%)"></div>
  <div class="t" style="left:188px;top:234px">Piccolo</div>
</div>
<!-- vertical scrollbar -->
<div class="a" style="left:383px;top:366px;width:17px;height:243px;background:linear-gradient(90deg,#e8e8e8,#f3f3f3 30%,#f3f3f3 70%,#e8e8e8)"></div>
<svg class="a" style="left:387px;top:371px" width="9" height="6"><path d="M0.5 5 L4.5 1 L8.5 5Z" fill="#404040"/></svg>
<svg class="a" style="left:387px;top:598px" width="9" height="6"><path d="M0.5 1 L4.5 5 L8.5 1Z" fill="#404040"/></svg>
<div class="a" style="left:384px;top:384px;width:14px;height:87px;border:1px solid #9b9b9b;border-radius:2px;background:linear-gradient(90deg,#e9e9e9,#f1f1f1 40%,#d7d7d7 60%,#cdcdcd)"></div>
<div class="a" style="left:387px;top:423px;width:7px;height:1px;background:#555;box-shadow:0 2px 0 #555,0 4px 0 #555,0 6px 0 #555"></div>
<!-- horizontal scrollbar -->
<div class="a" style="left:25px;top:609px;width:358px;height:17px;background:linear-gradient(#e8e8e8,#f3f3f3 30%,#f3f3f3 70%,#e8e8e8)"></div>
<svg class="a" style="left:31px;top:613px" width="6" height="9"><path d="M5 0.5 L1 4.5 L5 8.5Z" fill="#404040"/></svg>
<svg class="a" style="left:371px;top:613px" width="6" height="9"><path d="M1 0.5 L5 4.5 L1 8.5Z" fill="#404040"/></svg>
<div class="a" style="left:43px;top:611px;width:164px;height:14px;border:1px solid #9b9b9b;border-radius:2px;background:linear-gradient(#e9e9e9,#f1f1f1 40%,#d7d7d7 60%,#cdcdcd)"></div>
<div class="a" style="left:122px;top:614px;width:1px;height:7px;background:#555;box-shadow:2px 0 0 #555,4px 0 0 #555"></div>

<!-- status bar -->
<div class="a" style="left:8px;top:685px;width:1264px;height:3px;background:#a0a0a0"></div>
<div class="a" style="left:8px;top:688px;width:1264px;height:24px;background:#f0eded;border-top:1px solid #fbfbfb"></div>
<div class="t" style="left:9px;top:695px;transform:scaleX(0.975);transform-origin:0 0">716.93 mm; -1331.73 mm</div>
<div class="a" style="left:422px;top:690px;width:1px;height:21px;background:#d2d0d0"></div>
<div class="a" style="left:837px;top:690px;width:1px;height:21px;background:#d2d0d0"></div>
<svg class="a" style="left:1260px;top:700px" width="12" height="12"><g fill="#b8b8b8"><rect x="8" y="2" width="2" height="2"/><rect x="5" y="5" width="2" height="2"/><rect x="8" y="5" width="2" height="2"/><rect x="2" y="8" width="2" height="2"/><rect x="5" y="8" width="2" height="2"/><rect x="8" y="8" width="2" height="2"/></g></svg>

</body></html>
